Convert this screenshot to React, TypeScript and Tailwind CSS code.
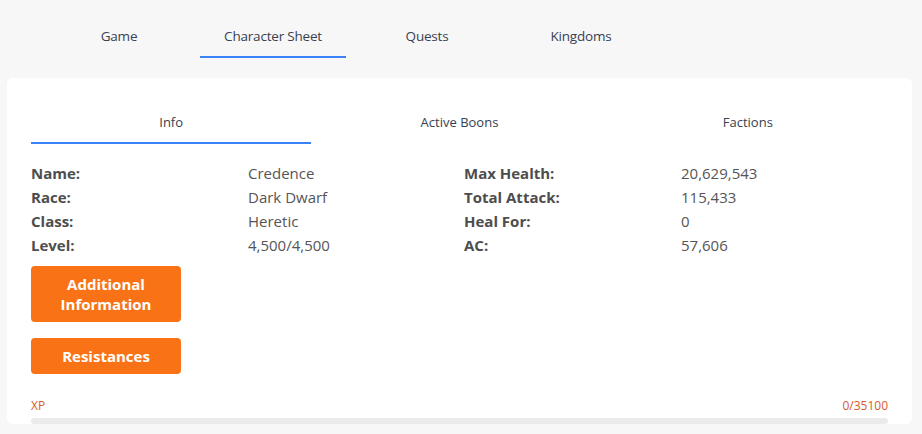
const topTabs = ["Game", "Character Sheet", "Quests", "Kingdoms"];
const innerTabs = ["Info", "Active Boons", "Factions"];

const stats: [string, string, string, string][] = [
  ["Name:", "Credence", "Max Health:", "20,629,543"],
  ["Race:", "Dark Dwarf", "Total Attack:", "115,433"],
  ["Class:", "Heretic", "Heal For:", "0"],
  ["Level:", "4,500/4,500", "AC:", "57,606"],
];

export default function App() {
  return (
    <main
      className="w-[922px] h-[434px] overflow-hidden bg-[#f7f7f7] text-[#555555]"
      style={{ fontFamily: '"Open Sans", "Noto Sans", sans-serif' }}
    >
      {/* top tabs */}
      <nav className="flex gap-2 pl-[46px] pt-[24px]">
        {topTabs.map((t) => (
          <div
            key={t}
            className={`w-[146px] h-[34px] pt-[2px] flex items-start justify-center text-[13.5px] tracking-[-0.2px] text-[#374151] border-b-2 ${
              t === "Character Sheet" ? "border-[#3b82f6]" : "border-transparent"
            }`}
          >
            {t}
          </div>
        ))}
      </nav>

      {/* card */}
      <section className="mt-[20px] ml-[7px] w-[905px] h-[346px] bg-white rounded-md px-6 pt-[26px]">
        <div className="flex gap-2">
          {innerTabs.map((t) => (
            <div
              key={t}
              className={`w-[281px] h-[40px] pt-[9px] flex items-start justify-center text-[13px] text-[#374151] border-b-2 ${
                t === "Info" ? "border-[#3b82f6]" : "border-transparent"
              }`}
            >
              {t}
            </div>
          ))}
        </div>

        <div className="mt-[17px] grid grid-cols-[217px_216px_217px_1fr] text-[15px] leading-[24px]">
          {stats.map(([a, b, c, d]) => (
            <div key={a} className="contents">
              <span className="font-bold text-[#4d4d4d]">{a}</span>
              <span>{b}</span>
              <span className="font-bold text-[#4d4d4d]">{c}</span>
              <span>{d}</span>
            </div>
          ))}
        </div>

        <div className="mt-[9px] flex flex-col gap-4 w-[150px]">
          <button className="h-[56px] bg-[#f97316] rounded-sm text-white font-bold text-[15px] leading-[20px]">
            Additional
            <br />
            Information
          </button>
          <button className="h-[36px] bg-[#f97316] rounded-sm text-white font-bold text-[15px]">
            Resistances
          </button>
        </div>

        <div className="mt-[24px] flex justify-between text-[12px] text-[#d65a2b] leading-[16px]">
          <span>XP</span>
          <span>0/35100</span>
        </div>
        <div className="mt-[4px] h-[6px] w-full bg-[#ebebeb] rounded" />
      </section>
    </main>
  );
}
